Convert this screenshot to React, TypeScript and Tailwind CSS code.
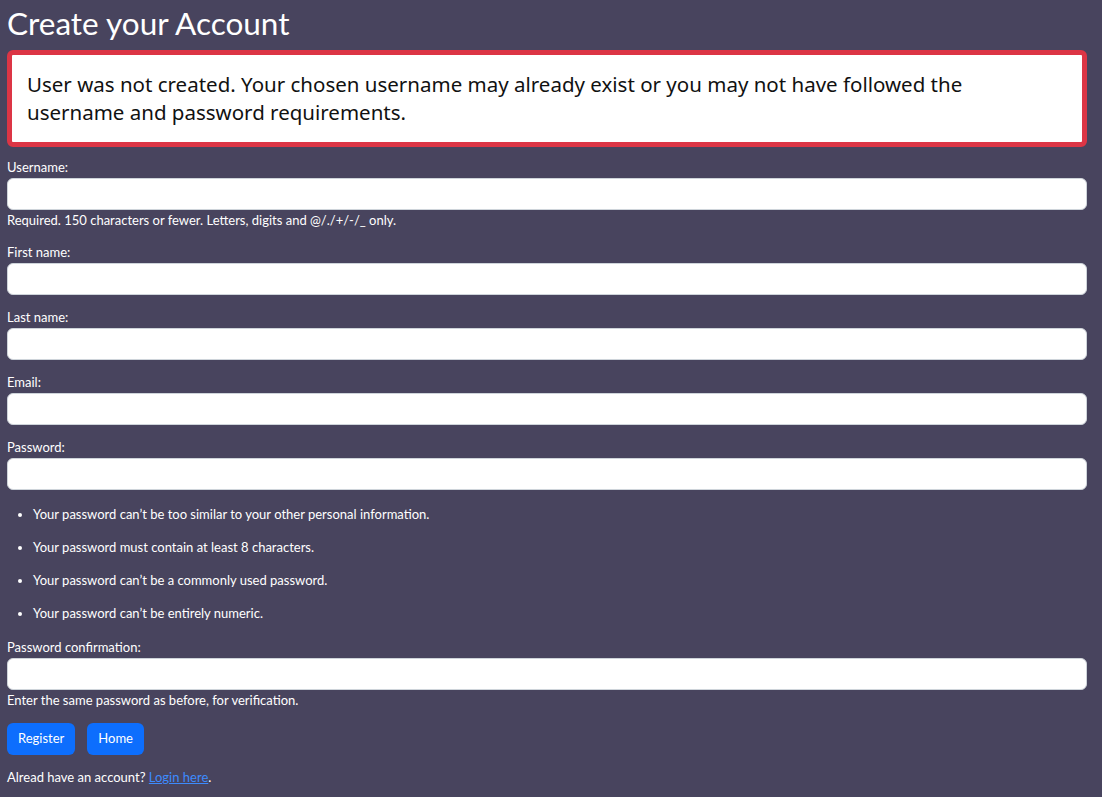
import React from "react";

const font = { fontFamily: "Lato, 'Noto Sans', sans-serif" };

function Field({ label, help }: { label: string; help?: string }) {
  return (
    <div className="mb-[12px]">
      <label className="block text-[13px] leading-[20px] text-white">{label}</label>
      <div className="mt-[1px] h-[32px] w-full rounded-[6px] border border-[#ced4da] bg-white" />
      {help && <div className="text-[13px] leading-[20px] text-white">{help}</div>}
    </div>
  );
}

export default function App() {
  return (
    <div className="min-h-[797px] bg-[#48445e] pl-[7px] pr-[15px]" style={font}>
      <h1 className="pt-[2px] text-[31.5px] leading-[42px] text-white">Create your Account</h1>
      <div className="mt-[6px] rounded-[6px] border-[5px] border-[#dc3545] bg-white pl-[15px] pr-[40px] pt-[15px] pb-[16px]">
        <p className="text-[20.5px] leading-[28px] text-[#111]" style={{ fontFamily: "'Noto Sans', sans-serif" }}>
          User was not created. Your chosen username may already exist or you may not have followed the username and password requirements.
        </p>
      </div>
      <div className="mt-[10px]">
        <Field label="Username:" help="Required. 150 characters or fewer. Letters, digits and @/./+/-/_ only." />
        <Field label="First name:" />
        <Field label="Last name:" />
        <Field label="Email:" />
        <Field label="Password:" />
        <ul className="mb-[14px] mt-[14px] list-disc pl-[26px] text-[13px] leading-[20px] text-white">
          <li className="mb-[13px]">Your password can’t be too similar to your other personal information.</li>
          <li className="mb-[13px]">Your password must contain at least 8 characters.</li>
          <li className="mb-[13px]">Your password can’t be a commonly used password.</li>
          <li>Your password can’t be entirely numeric.</li>
        </ul>
        <Field label="Password confirmation:" help="Enter the same password as before, for verification." />
        <div className="mt-[13px] flex gap-[12px]">
          <button className="h-[32px] rounded-[6px] bg-[#0d6efd] px-[11px] text-[13px] text-white">Register</button>
          <button className="h-[32px] rounded-[6px] bg-[#0d6efd] px-[11px] text-[13px] text-white">Home</button>
        </div>
        <p className="mt-[12px] text-[13px] leading-[20px] text-white">
          Alread have an account? <a href="#" className="text-[#3d8bfd] underline">Login here</a>.
        </p>
      </div>
    </div>
  );
}
